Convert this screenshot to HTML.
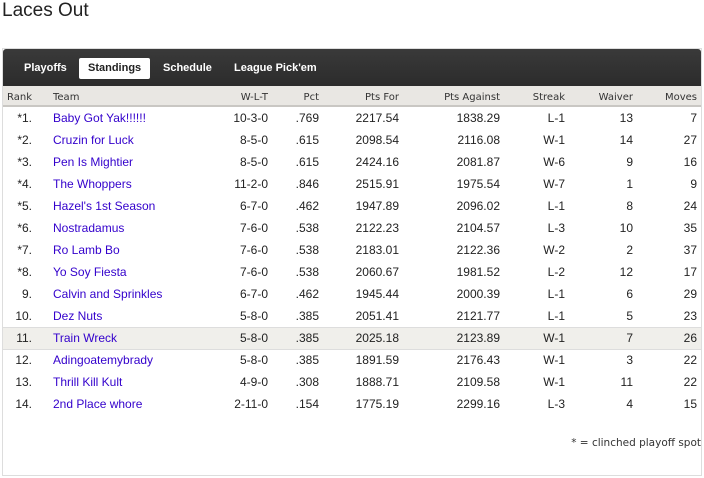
<!DOCTYPE html>
<html><head><meta charset="utf-8"><style>
body{margin:0;width:704px;height:478px;background:#fff;font-family:"Liberation Sans",Arial,sans-serif;position:relative;overflow:hidden}
h1{position:absolute;left:2px;top:0;margin:0;font-weight:normal;font-size:19px;color:#222;line-height:22px}
.box{position:absolute;left:2px;top:48px;width:698px;height:426px;border:1px solid #ddd;}
.nav{position:absolute;left:0;top:0;width:698px;height:37px;background:linear-gradient(#3a3a3a,#333 45%,#2c2c2c);border-radius:3px 3px 0 0}
.nav span{position:absolute;top:9px;height:21px;line-height:21px;font-size:11px;font-weight:bold;color:#fff;padding:0 9px;border-radius:2px}
.nav span.on{background:#fff;color:#222}
.hdr{position:absolute;left:0;top:37px;width:698px;height:19px;background:#e9e7e3;border-bottom:2px solid #c9c7c3}
.c{position:absolute;white-space:nowrap;font-size:12px;color:#222}
.h{font-family:"DejaVu Sans",Verdana,sans-serif;font-size:10px;color:#333}
.r{text-align:right}
.t{color:#3300cc}
.hl{position:absolute;left:0;width:698px;height:21px;background:#f0efeb;border-top:1px solid #ddd;border-bottom:1px solid #ddd}
</style></head><body>
<h1>Laces Out</h1>
<div class="box">
<div class="nav"><span style="left:12px">Playoffs</span><span class="on" style="left:76px">Standings</span><span style="left:151px">Schedule</span><span style="left:222px">League Pick'em</span></div>
<div class="hdr"></div>
<div class="hl" style="top:278px"></div>
</div>
<div id="t"></div>
<script>
var rows=[["*1.","Baby Got Yak!!!!!!","10-3-0",".769","2217.54","1838.29","L-1","13","7"],
["*2.","Cruzin for Luck","8-5-0",".615","2098.54","2116.08","W-1","14","27"],
["*3.","Pen Is Mightier","8-5-0",".615","2424.16","2081.87","W-6","9","16"],
["*4.","The Whoppers","11-2-0",".846","2515.91","1975.54","W-7","1","9"],
["*5.","Hazel's 1st Season","6-7-0",".462","1947.89","2096.02","L-1","8","24"],
["*6.","Nostradamus","7-6-0",".538","2122.23","2104.57","L-3","10","35"],
["*7.","Ro Lamb Bo","7-6-0",".538","2183.01","2122.36","W-2","2","37"],
["*8.","Yo Soy Fiesta","7-6-0",".538","2060.67","1981.52","L-2","12","17"],
["9.","Calvin and Sprinkles","6-7-0",".462","1945.44","2000.39","L-1","6","29"],
["10.","Dez Nuts","5-8-0",".385","2051.41","2121.77","L-1","5","23"],
["11.","Train Wreck","5-8-0",".385","2025.18","2123.89","W-1","7","26"],
["12.","Adingoatemybrady","5-8-0",".385","1891.59","2176.43","W-1","3","22"],
["13.","Thrill Kill Kult","4-9-0",".308","1888.71","2109.58","W-1","11","22"],
["14.","2nd Place whore","2-11-0",".154","1775.19","2299.16","L-3","4","15"]];
var R=[32,0,268,319,399,500,565,633,697];
var h='';
var hd=["Rank","Team","W-L-T","Pct","Pts For","Pts Against","Streak","Waiver","Moves"];
hd.forEach(function(x,i){
 if(i==0)h+='<div class="c h" style="left:7px;top:92px">'+x+'</div>';
 else if(i==1)h+='<div class="c h" style="left:53px;top:92px">'+x+'</div>';
 else h+='<div class="c h r" style="right:'+(704-R[i])+'px;top:92px">'+x+'</div>';
});
rows.forEach(function(r,j){var y=111+22*j;
 r.forEach(function(x,i){
  if(i==1)h+='<div class="c t" style="left:53px;top:'+y+'px">'+x+'</div>';
  else h+='<div class="c r" style="right:'+(704-R[i])+'px;top:'+y+'px">'+x+'</div>';
 });});
h+='<div class="c h" style="right:3px;top:437px;font-size:10.5px">* = clinched playoff spot</div>';
document.getElementById('t').innerHTML=h;
</script>
</body></html>
